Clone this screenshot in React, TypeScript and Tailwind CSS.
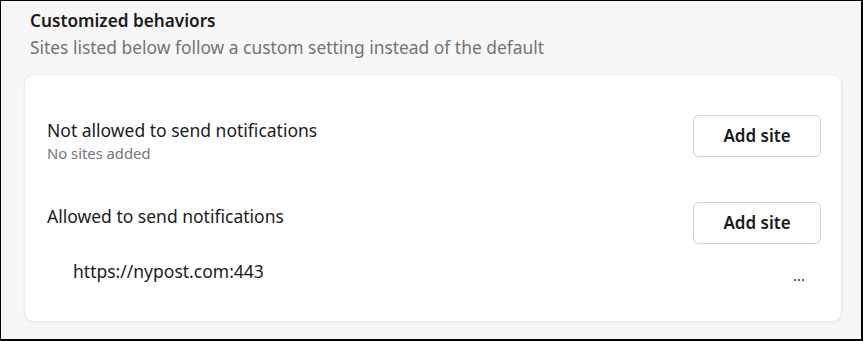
import React from "react";

function AddButton() {
  return (
    <button className="w-[128px] h-[42px] shrink-0 rounded-[6px] border border-[#d4d4d4] bg-white text-[17px] font-semibold text-[#1a1a1a] shadow-[0_1px_1px_rgba(0,0,0,0.04)]">
      Add site
    </button>
  );
}

export default function App() {
  return (
    <div
      className="w-[863px] h-[341px] bg-[#f7f7f7] border-t border-l border-r-2 border-b-2 border-black overflow-hidden text-[#1b1b1b]"
      style={{ fontFamily: '"Noto Sans", "Open Sans", sans-serif' }}
    >
      <div className="pl-[29px] pt-[8px]">
        <div className="text-[17.2px] font-semibold leading-[24px]">Customized behaviors</div>
        <div className="text-[17.4px] leading-[24px] text-[#737373] mt-[2px]">
          Sites listed below follow a custom setting instead of the default
        </div>
      </div>
      <div className="ml-[23px] mr-[19px] mt-[15px] h-[248px] rounded-[10px] bg-white border border-[#ebebeb] shadow-[0_1px_2px_rgba(0,0,0,0.08)] pl-[22px] pr-[20px]">
        <div className="flex items-start justify-between pt-[40px]">
          <div className="mt-[4px]">
            <div className="text-[17.5px] leading-[22px]">Not allowed to send notifications</div>
            <div className="text-[14.8px] leading-[20px] text-[#767676] mt-[2px]">No sites added</div>
          </div>
          <AddButton />
        </div>
        <div className="flex items-start justify-between mt-[39px]">
          <div className="text-[17.5px] leading-[22px] mt-[3px]">Allowed to send notifications</div>
          <AddButton />
        </div>
        <div className="flex items-center justify-between pl-[26px] pr-[16px] mt-[11px]">
          <div className="text-[17.5px] leading-[24px]">https://nypost.com:443</div>
          <div className="text-[15px] leading-[24px] text-[#333] pt-[8px]">...</div>
        </div>
      </div>
    </div>
  );
}
